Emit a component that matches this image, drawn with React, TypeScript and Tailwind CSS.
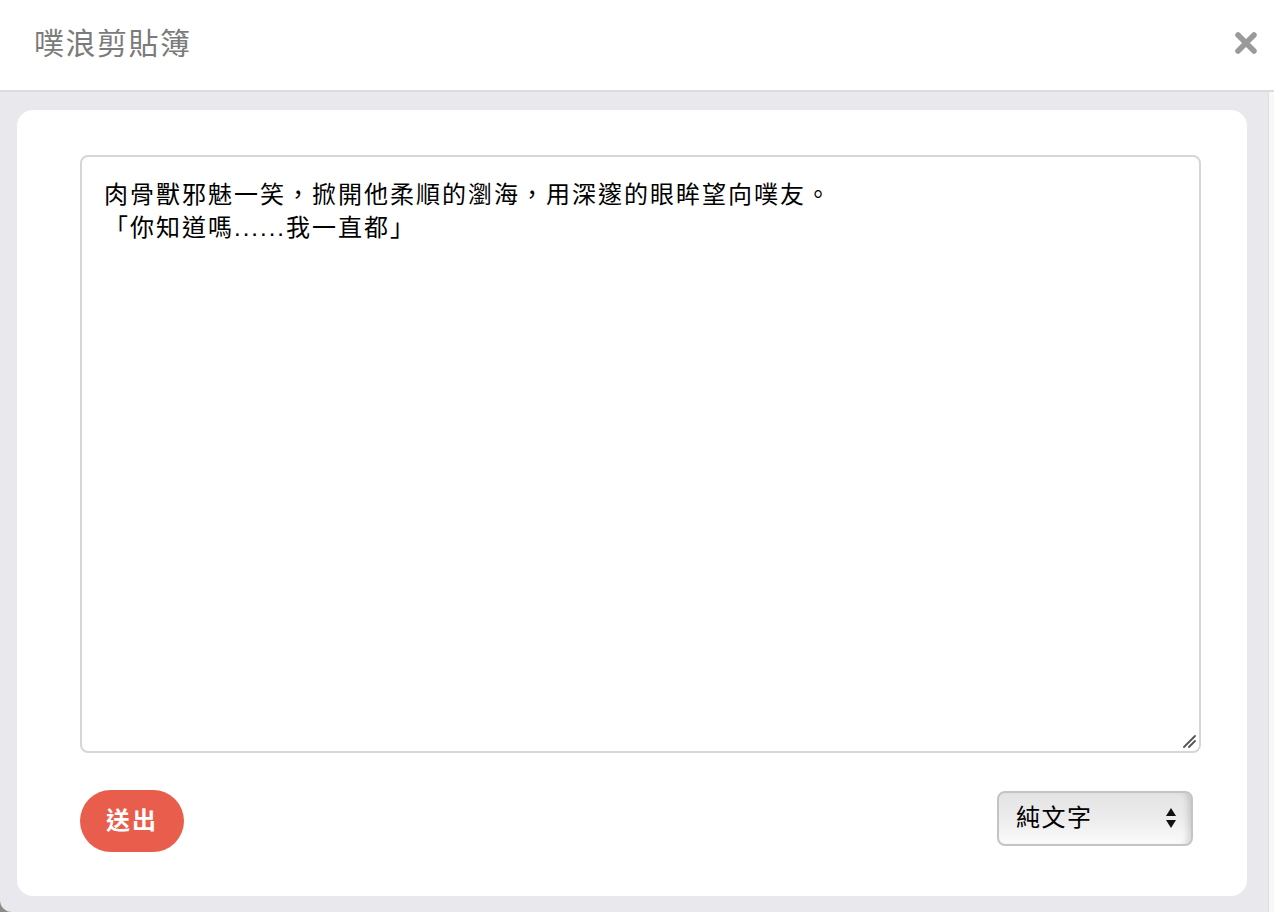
import React from "react";

const cjk = '"Helvetica Neue", "Liberation Sans", "Noto Sans CJK TC", sans-serif';

export default function App() {
  return (
    <div className="w-[1274px] h-[912px] bg-[#8f8b86] overflow-hidden" style={{ fontFamily: cjk }}>
      <div className="w-full h-full flex flex-col bg-[#e9e8ed] rounded-bl-[12px] overflow-hidden">
        <header className="h-[92px] shrink-0 bg-white border-b-2 border-[#dcdcdc] flex items-center justify-between pl-[34px] pr-[16px]">
          <h1 className="text-[30px] text-[#7b7b7b] font-normal tracking-[1.5px] pb-[4px]">噗浪剪貼簿</h1>
          <svg width="24" height="24" viewBox="0 0 24 24" className="mb-[4px]">
            <path d="M4 4 L20 20 M20 4 L4 20" stroke="#9a9a9a" strokeWidth="5.5" strokeLinecap="round" />
          </svg>
        </header>
        <div className="flex-1 flex">
          <main className="flex-1 pt-[18px] pl-[17px] pr-[21px] pb-[15px]">
            <div className="bg-white rounded-[16px] h-[786px] pl-[63px] pt-[45px]">
              <div className="w-[1121px] h-[598px] border-2 border-[#d6d6d6] rounded-[8px] relative pt-[21px] pl-[22px]">
                <p className="text-[24px] leading-[33px] text-black tracking-[2px]">
                  肉骨獸邪魅一笑，掀開他柔順的瀏海，用深邃的眼眸望向噗友。
                  <br />
                  「你知道嗎......我一直都」
                </p>
                <svg className="absolute right-[3px] bottom-[3px]" width="14" height="14" viewBox="0 0 14 14">
                  <path d="M2 13 L13 2 M7 13 L13 7" stroke="#555" strokeWidth="1.8" strokeLinecap="round" />
                </svg>
              </div>
              <div className="w-[1113px] flex items-center justify-between mt-[37px]">
                <button className="w-[104px] h-[62px] rounded-full bg-[#e85d4c] text-white text-[24px] font-bold tracking-[2px]">
                  送出
                </button>
                <div className="w-[196px] h-[55px] rounded-[8px] border-2 border-[#c4c4c4] bg-gradient-to-b from-[#e4e4e4] via-[#ececec] to-[#fbfbfb] shadow-[inset_-7px_0_6px_-4px_rgba(0,0,0,0.15)] flex items-center justify-between pl-[17px] pr-[14px] mb-[6px]">
                  <span className="text-[24px] text-black tracking-[1.5px]">純文字</span>
                  <svg width="12" height="22" viewBox="0 0 12 22">
                    <path d="M6 1 L11 9 L1 9 Z" fill="#111" />
                    <path d="M6 21 L11 13 L1 13 Z" fill="#111" />
                  </svg>
                </div>
              </div>
            </div>
          </main>
          <div className="w-[6px] border-l border-[#dedede] bg-[#f8f8f8]" />
        </div>
      </div>
    </div>
  );
}
